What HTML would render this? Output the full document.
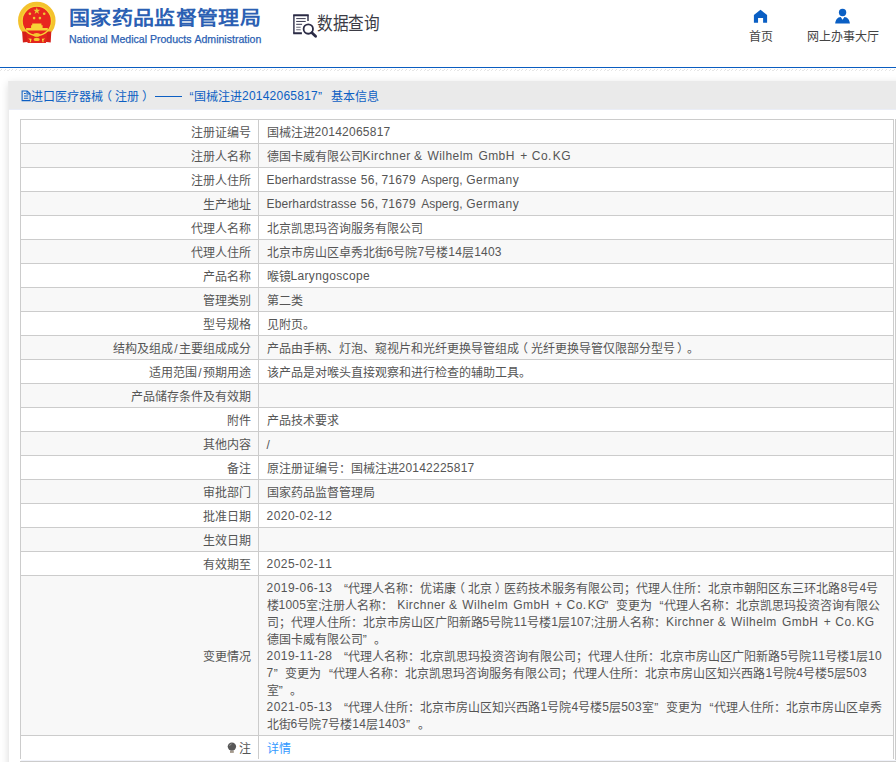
<!DOCTYPE html>
<html lang="zh-CN">
<head>
<meta charset="utf-8">
<title>数据查询</title>
<style>
html,body{margin:0;padding:0;background:#fff;}
body{width:896px;height:762px;overflow:hidden;position:relative;font-family:"Liberation Sans",sans-serif;font-size:12px;line-height:17px;color:#555;text-spacing-trim:space-all;font-kerning:none;}
.abs{position:absolute;}
i{font-style:normal;}
.n,.d,.kw,.eb,.la,.sc{position:relative;top:-1px;}
#art{left:0;top:0;width:896px;height:60px;}
#title{left:69px;top:5.5px;font-size:21px;letter-spacing:.33px;font-weight:bold;color:#2b5fb3;white-space:nowrap;line-height:26px;transform:scaleY(.92);transform-origin:0 50%;}
#sub{left:69px;top:32.5px;font-size:10.55px;color:#2b5fb3;-webkit-text-stroke:.25px #2b5fb3;white-space:nowrap;line-height:12px;}
#qtext{left:317px;top:12.4px;font-size:18px;color:#3b3b45;white-space:nowrap;line-height:24px;transform:scaleX(.868);transform-origin:0 0;}
.nav{font-size:12px;color:#444;white-space:nowrap;line-height:14px;text-align:center;}
#blue{left:0;top:67px;width:896px;height:1px;background:#0a5dc0;}
#hatch{left:0;top:69px;width:896px;height:1px;background:repeating-linear-gradient(90deg,transparent 0,transparent 1.1px,#e2e2e2 1.1px,#e2e2e2 2.2px,transparent 2.2px,transparent 3.75px);}
#hatch2{left:0;top:70px;width:896px;height:1px;background:repeating-linear-gradient(90deg,#e6e6e6 0,#e6e6e6 1.1px,transparent 1.1px,transparent 3.75px);}
#panel{left:8px;top:81px;width:900px;height:700px;background:#fff;border-left:1px solid #ececec;box-shadow:0 2px 8px rgba(0,0,0,.13);}
#phead{left:0;top:0;width:900px;height:28px;background:#eaeaea;border-bottom:1px solid #eaedf6;}
#ptitle{left:-1px;top:8px;color:#0d5fc3;font-size:12px;line-height:17px;white-space:nowrap;height:17px;}
#ptitle span{position:absolute;top:0;}
table{position:absolute;left:11px;top:38px;width:874px;border-collapse:collapse;table-layout:fixed;border-spacing:0;font-size:12px;}
td{border:1px solid #ccc;padding:5px 7px 1px 8px;line-height:17px;font-size:12px;color:#555;vertical-align:middle;white-space:nowrap;overflow:hidden;}
td.l{text-align:right;width:222px;padding-right:7px;}
td.v{width:619.5px;padding-left:7.5px;}
tr:nth-child(even) td{background:#f8f8f8;}
tr.last td{border-bottom:none;}
a{color:#3399ff;text-decoration:none;}
.n{letter-spacing:.23px;}
.d{letter-spacing:.46px;}
.kw{letter-spacing:.445px;}
.eb{letter-spacing:.276px;}
.la{letter-spacing:.34px;}
.pl{position:relative;left:-3px;}
.pr{position:relative;left:2.7px;}
.w{display:inline-block;}
.sl{display:inline-block;width:6px;text-align:center;}
.sp{display:inline-block;width:4px;}
.sc{display:inline-block;width:3.2px;}
.ql{display:inline-block;width:11.6px;padding-right:.4px;text-align:right;}
.qr{display:inline-block;width:11.7px;padding-left:.3px;text-align:left;}
.bulb{vertical-align:-1px;margin-right:2px;}
#rb{left:895px;top:119px;width:1px;height:643px;background:#ccc;}
#bb1{left:21px;top:760px;width:875px;height:1px;background:#f1f3fa;}
#bb2{left:20px;top:761px;width:876px;height:1px;background:#ccc;}
</style>
</head>
<body>
<svg id="art" class="abs" viewBox="0 0 896 60">
<!-- national emblem -->
<g>
<circle cx="36.8" cy="20.6" r="16.5" fill="none" stroke="#f4c22d" stroke-width="4.5"/>
<path d="M22.1 31.5 L51.3 31.5 L50.7 42.4 L44.4 41.7 L43.3 42.9 L30.3 42.9 L29.2 41.7 L22.9 42.4 Z" fill="#d5201a"/>
<path d="M26 31 L47.6 31 L46 42.9 L27.6 42.9 Z" fill="#e3251d"/>
<circle cx="36.8" cy="20.9" r="14.7" fill="#e8271f" stroke="#f7d335" stroke-width="1.3"/>
<path d="M26.1 28 H47.8 V30.6 H26.1 Z M31.1 28 V25.2 H42.6 V28 Z M32.2 25.4 V23.6 H41.4 V25.4 Z" fill="#f8d437"/>
<path d="M28.2 38.4 L31.6 38.8 L30.8 42.2 L29.8 42.2 L30 40 Z M45.2 38.4 L41.8 38.8 L42.6 42.2 L43.6 42.2 L43.4 40 Z" fill="#f8dc3a"/>
<ellipse cx="36.7" cy="34.9" rx="3.4" ry="1.8" fill="#f5c92f"/>
<ellipse cx="36.7" cy="39.4" rx="3" ry="1.6" fill="#f4c52e"/>
<g fill="#ecc832">
<path d="M36.80 7.20 L37.65 9.73 L40.32 9.76 L38.18 11.35 L38.97 13.89 L36.80 12.35 L34.63 13.89 L35.42 11.35 L33.28 9.76 L35.95 9.73 Z"/>
<circle cx="29.9" cy="13.8" r="1.3"/><circle cx="44.2" cy="13.8" r="1.3"/><circle cx="34.1" cy="18.1" r="1.3"/><circle cx="39.9" cy="18.1" r="1.3"/>
</g>
</g>
<!-- query icon -->
<g fill="none" stroke="#2b2b45">
<path d="M293.9 15.2 V33.2" stroke-width="1.4"/>
<path d="M293.2 15.2 H308.7 M293.2 33.2 H301.9" stroke-width="1.9"/>
<path d="M308 15.2 V21" stroke-width="1.4"/>
<path d="M296.2 18.6 H305.7 M296.2 21.45 H305.7 M296.2 24.3 H302.1" stroke-width="1" stroke="#3a3a50"/>
<path d="M296.2 27.2 H300.7 M296.2 29.8 H300.7" stroke-width="1.1" stroke="#6a6a7a"/>
<circle cx="308.3" cy="29.05" r="4.7" stroke-width="1.8"/>
<path d="M311.9 32.8 L315.6 36.2" stroke-width="2.8" stroke-linecap="round"/>
</g>
<!-- home icon -->
<path d="M760.5 9.7 L767.1 14.9 V22.75 H763.1 V17.9 H758.05 V22.75 H753.9 V14.9 Z" fill="#0a5fc4"/>
<!-- person icon -->
<circle cx="842.56" cy="12.54" r="3.68" fill="#0a5fc4"/>
<path d="M835.2 23.6 C835.4 20 837.5 17 840.7 16.9 L842.56 19.7 L844.4 16.9 C847.6 17 849.7 20 849.9 23.6 Z" fill="#0a5fc4"/>
</svg>
<div id="title" class="abs">国家药品监督管理局</div>
<div id="sub" class="abs">National Medical Products Administration</div>
<div id="qtext" class="abs">数据查询</div>
<div class="abs nav" style="left:730.5px;top:30px;width:60px;">首页</div>
<div class="abs nav" style="left:792.5px;top:30px;width:100px;">网上办事大厅</div>
<div id="blue" class="abs"></div>
<div id="hatch" class="abs"></div>
<div id="hatch2" class="abs"></div>
<div id="panel" class="abs">
<div id="phead" class="abs"></div>
<svg class="abs" style="left:12px;top:9px" width="11" height="12" viewBox="0 0 11 12"><path d="M1.1 .9 H6.2 L9.1 3.8 V10.6 H1.1 Z M6 .9 V4 H9.1 M3 3.5 H4.8 M3 5.9 H7.2 M3 8.3 H7.2" fill="none" stroke="#0d5fc3" stroke-width="1.05"/></svg>
<div id="ptitle" class="abs"><span style="left:23.4px">进口医疗器械<i class="pl">（</i>注册<i class="pr">）</i></span><span style="left:147.2px;top:7px;width:26.8px;height:1px;background:#0d5fc3"></span><span style="left:174px;width:11.6px;text-align:right">“</span><span style="left:186px">国械注进<i class="n">20142065817</i>”</span><span style="left:323px">基本信息</span></div>
<table>
<tr><td class="l">注册证编号</td><td class="v">国械注进<i class="n">20142065817</i></td></tr>
<tr><td class="l">注册人名称</td><td class="v">德国卡威有限公司<i class="kw w" style="width:51.6px">Kirchner</i><i class="kw w" style="width:13.4px">&amp;</i><i class="kw w" style="width:50.9px">Wilhelm</i><i class="kw w" style="width:41.8px">GmbH</i><i class="kw w" style="width:11.6px">+</i><i class="kw w" style="width:21.1px">Co.</i><i class="kw w" style="width:16.3px">KG</i></td></tr>
<tr><td class="l">注册人住所</td><td class="v"><i class="eb w" style="width:94.3px;letter-spacing:.13px">Eberhardstrasse</i><i class="eb w" style="width:20.6px">56,</i><i class="eb w" style="width:39.8px;letter-spacing:.23px">71679</i><i class="eb w" style="width:45.1px;letter-spacing:0">Asperg,</i><i class="eb" style="letter-spacing:.5px">Germany</i></td></tr>
<tr><td class="l">生产地址</td><td class="v"><i class="eb w" style="width:94.3px;letter-spacing:.13px">Eberhardstrasse</i><i class="eb w" style="width:20.6px">56,</i><i class="eb w" style="width:39.8px;letter-spacing:.23px">71679</i><i class="eb w" style="width:45.1px;letter-spacing:0">Asperg,</i><i class="eb" style="letter-spacing:.5px">Germany</i></td></tr>
<tr><td class="l">代理人名称</td><td class="v">北京凯思玛咨询服务有限公司</td></tr>
<tr><td class="l">代理人住所</td><td class="v">北京市房山区卓秀北街<i class="n">6</i>号院<i class="n">7</i>号楼<i class="n">14</i>层<i class="n">1403</i></td></tr>
<tr><td class="l">产品名称</td><td class="v">喉镜<i class="la">Laryngoscope</i></td></tr>
<tr><td class="l">管理类别</td><td class="v">第二类</td></tr>
<tr><td class="l">型号规格</td><td class="v">见附页。</td></tr>
<tr><td class="l">结构及组成<i class="sl">/</i>主要组成成分</td><td class="v">产品由手柄、灯泡、窥视片和光纤更换导管组成<i class="pl">（</i>光纤更换导管仅限部分型号<i class="pr">）</i>。</td></tr>
<tr><td class="l">适用范围<i class="sl">/</i>预期用途</td><td class="v">该产品是对喉头直接观察和进行检查的辅助工具。</td></tr>
<tr><td class="l">产品储存条件及有效期</td><td class="v">&nbsp;</td></tr>
<tr><td class="l">附件</td><td class="v">产品技术要求</td></tr>
<tr><td class="l">其他内容</td><td class="v">/</td></tr>
<tr><td class="l">备注</td><td class="v">原注册证编号：国械注进<i class="n">20142225817</i></td></tr>
<tr><td class="l">审批部门</td><td class="v">国家药品监督管理局</td></tr>
<tr><td class="l">批准日期</td><td class="v"><i class="d">2020-02-12</i></td></tr>
<tr><td class="l">生效日期</td><td class="v">&nbsp;</td></tr>
<tr><td class="l">有效期至</td><td class="v"><i class="d">2025-02-11</i></td></tr>
<tr><td class="l">变更情况</td><td class="v"><i class="d">2019-06-13</i><i class="sp"></i><i class="ql">“</i>代理人名称：优诺康<i class="pl">（</i>北京<i class="pr">）</i>医药技术服务有限公司；代理人住所：北京市朝阳区东三环北路<i class="n">8</i>号<i class="n">4</i>号<br>楼<i class="n">1005</i>室<i class="sc">;</i>注册人名称：<i class="sp"></i><i class="kw w" style="width:51.6px">Kirchner</i><i class="kw w" style="width:13.4px">&amp;</i><i class="kw w" style="width:50.9px">Wilhelm</i><i class="kw w" style="width:41.8px">GmbH</i><i class="kw w" style="width:11.6px">+</i><i class="kw w" style="width:21.1px">Co.</i><i class="kw w" style="width:16.3px">KG</i><i class="qr">”</i>变更为<i class="ql">“</i>代理人名称：北京凯思玛投资咨询有限公<br>司；代理人住所：北京市房山区广阳新路<i class="n">5</i>号院<i class="n">11</i>号楼<i class="n">1</i>层<i class="n">107</i><i class="sc">;</i>注册人名称：<i class="kw w" style="width:51.6px">Kirchner</i><i class="kw w" style="width:13.4px">&amp;</i><i class="kw w" style="width:50.9px">Wilhelm</i><i class="kw w" style="width:41.8px">GmbH</i><i class="kw w" style="width:11.6px">+</i><i class="kw w" style="width:21.1px">Co.</i><i class="kw w" style="width:16.3px">KG</i><br>德国卡威有限公司<i class="qr">”</i>。<br><i class="d">2019-11-28</i><i class="sp"></i><i class="ql">“</i>代理人名称：北京凯思玛投资咨询有限公司；代理人住所：北京市房山区广阳新路<i class="n">5</i>号院<i class="n">11</i>号楼<i class="n">1</i>层<i class="n">10</i><br><i class="n">7</i><i class="qr">”</i>变更为<i class="ql">“</i>代理人名称：北京凯思玛咨询服务有限公司；代理人住所：北京市房山区知兴西路<i class="n">1</i>号院<i class="n">4</i>号楼<i class="n">5</i>层<i class="n">503</i><br>室<i class="qr">”</i>。<br><i class="d">2021-05-13</i><i class="sp"></i><i class="ql">“</i>代理人住所：北京市房山区知兴西路<i class="n">1</i>号院<i class="n">4</i>号楼<i class="n">5</i>层<i class="n">503</i>室<i class="qr">”</i>变更为<i class="ql">“</i>代理人住所：北京市房山区卓秀<br>北街<i class="n">6</i>号院<i class="n">7</i>号楼<i class="n">14</i>层<i class="n">1403</i><i class="qr">”</i>。</td></tr>
<tr class="last"><td class="l"><svg class="bulb" width="10" height="12" viewBox="0 0 10 12"><circle cx="4.9" cy="4.6" r="4.2" fill="#585858"/><path d="M2.6 3.9a2.6 2.6 0 0 1 2-2" stroke="#9a9a9a" stroke-width="1" fill="none"/><rect x="3" y="8.7" width="3.8" height="2.2" fill="#a59a8c"/></svg>注</td><td class="v"><a>详情</a></td></tr>
</table>
</div>
<div id="rb" class="abs"></div>
<div id="bb1" class="abs"></div>
<div id="bb2" class="abs"></div>
</body>
</html>
